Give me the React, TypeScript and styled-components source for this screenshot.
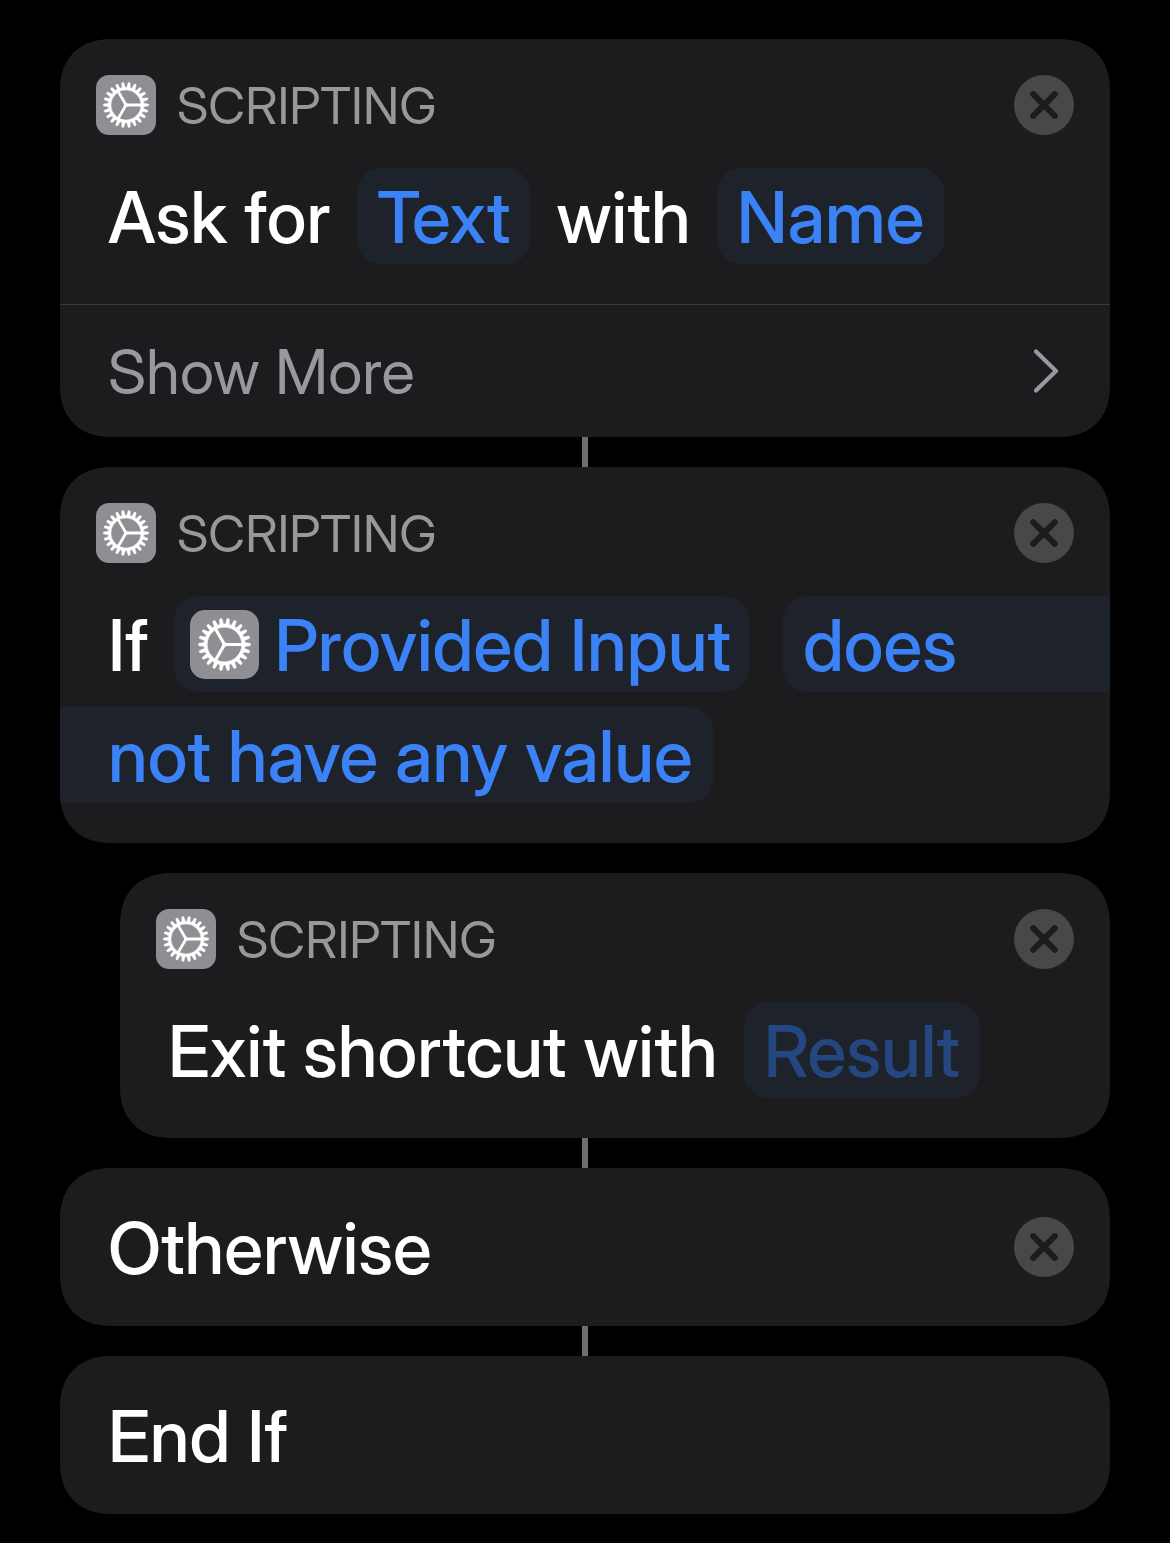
import React from "react";
import styled, { createGlobalStyle, css } from "styled-components";

const color = {
  page: "#000000",
  card: "#1c1c1e",
  token: "#1e222a",
  blue: "#3b82f7",
  blueDim: "#24477f",
  label: "#98989b",
  more: "#98989f",
  line: "#3a3a3c",
  connector: "#6d6d72",
  iconTile: "#8e8e93",
  close: "#48484a",
};

const GlobalStyle = createGlobalStyle`
  *, *::before, *::after { box-sizing: border-box; }
  body {
    margin: 0;
    background: ${color.page};
    color: #ffffff;
    font-family: "Inter Display", Inter, Roboto, "Liberation Sans", sans-serif;
  }
  button {
    margin: 0;
    padding: 0;
    border: 0;
    background: none;
    color: inherit;
    font: inherit;
    text-align: left;
    cursor: pointer;
  }
`;

const Page = styled.main`
  display: flex;
  flex-direction: column;
  padding: 39px 60px 29px;
`;

const Card = styled.section<{ $nested?: boolean }>`
  margin-left: ${(p) => (p.$nested ? 60 : 0)}px;
  border-radius: 48px;
  background: ${color.card};
  overflow: hidden;

  @supports (corner-shape: superellipse(1.2)) {
    border-radius: 52px;
    corner-shape: superellipse(1.2);
  }
`;

const Connector = styled.div<{ $hidden?: boolean }>`
  align-self: center;
  width: 6px;
  height: 30px;
  background: ${(p) => (p.$hidden ? "transparent" : color.connector)};
`;

const Header = styled.header`
  display: flex;
  align-items: center;
  gap: 21px;
  padding: 36px 36px 0;
`;

const Category = styled.h2`
  flex: 1;
  margin: 0;
  padding-top: 2px;
  color: ${color.label};
  font-size: 51px;
  font-weight: 400;
  line-height: 58px;
`;

const IconTile = styled.svg<{ $size: number }>`
  display: block;
  flex: none;
  width: ${(p) => p.$size}px;
  height: ${(p) => p.$size}px;
`;

const CloseButton = styled.button`
  flex: none;
  width: 60px;
  height: 60px;
  border-radius: 50%;

  svg {
    display: block;
  }
`;

const statementText = css`
  font-size: 71px;
  font-weight: 500;
  line-height: 94px;
`;

const Statement = styled.div`
  ${statementText}
  display: flex;
  flex-wrap: wrap;
  align-items: center;
  gap: 15px 26px;
  padding: 33px 0 40px 48px;
  white-space: nowrap;
`;

const Words = styled.span`
  padding-top: 2px;
`;

const tokenBox = css`
  height: 96px;
  padding-top: 2px;
  background: ${color.token};
  color: ${color.blue};
`;

const Token = styled.button<{ $placeholder?: boolean }>`
  ${tokenBox}
  padding-left: 20px;
  padding-right: 20px;
  border-radius: 24px;
  ${(p) => p.$placeholder && css`color: ${color.blueDim};`}
`;

const VariableToken = styled.button`
  ${tokenBox}
  display: flex;
  align-items: center;
  gap: 15px;
  margin-right: 8px;
  padding: 0 18px 0 16px;
  border-radius: 24px;
`;

const WrappedToken = styled.button`
  display: contents;
`;

const TokenStart = styled.span`
  ${tokenBox}
  flex: 1 0 auto;
  padding-left: 20px;
  border-radius: 24px 0 0 24px;
`;

const TokenEnd = styled.span`
  ${tokenBox}
  margin-left: -48px;
  padding-left: 48px;
  padding-right: 20px;
  border-radius: 0 24px 24px 0;
`;

const ShowMore = styled.button`
  display: flex;
  align-items: center;
  justify-content: space-between;
  width: 100%;
  height: 133px;
  padding: 0 48px;
  border-top: 1px solid ${color.line};
  color: ${color.more};
  font-size: 62px;
  line-height: 80px;
`;

const BlockRow = styled.div`
  display: flex;
  align-items: center;
  justify-content: space-between;
  padding: 31px 36px 31px 48px;
`;

const BlockTitle = styled.h2`
  ${statementText}
  margin: 0;
  padding-top: 2px;
`;

const TEETH = 22;

function gearOutline() {
  const points: string[] = [];
  const step = 360 / TEETH;
  const at = (radius: number, degrees: number) => {
    const a = (degrees * Math.PI) / 180;
    points.push(`${(30 + radius * Math.cos(a)).toFixed(2)} ${(30 + radius * Math.sin(a)).toFixed(2)}`);
  };
  for (let i = 0; i < TEETH; i++) {
    const mid = i * step;
    at(17.8, mid - 5.4);
    at(22.2, mid - 2.9);
    at(22.7, mid - 1.6);
    at(22.7, mid + 1.6);
    at(22.2, mid + 2.9);
    at(17.8, mid + 5.4);
  }
  return `M${points.join("L")}Z M45 30A15 15 0 1 0 15 30A15 15 0 1 0 45 30Z`;
}

const GEAR = gearOutline();

function ScriptingIcon({ size = 60 }: { size?: number }) {
  return (
    <IconTile $size={size} viewBox="0 0 60 60" aria-hidden="true">
      <rect width="60" height="60" rx="13" fill={color.iconTile} />
      <path d={GEAR} fill="#fff" fillRule="evenodd" stroke="#fff" strokeWidth="0.4" strokeLinejoin="round" />
      <path d="M30 30H46M30 30L22 16.14M30 30L22 43.86" stroke="#fff" strokeWidth="2.8" fill="none" />
      <circle cx="30" cy="30" r="2" fill="#fff" />
    </IconTile>
  );
}

function Close({ label }: { label: string }) {
  return (
    <CloseButton type="button" aria-label={label}>
      <svg width="60" height="60" viewBox="0 0 60 60" aria-hidden="true">
        <circle cx="30" cy="30" r="30" fill={color.close} />
        <path d="M19.2 19.2L40.8 40.8M40.8 19.2L19.2 40.8" stroke={color.card} strokeWidth="6" strokeLinecap="round" />
      </svg>
    </CloseButton>
  );
}

function ScriptingHeader() {
  return (
    <Header>
      <ScriptingIcon />
      <Category>SCRIPTING</Category>
      <Close label="Remove action" />
    </Header>
  );
}

export default function App() {
  return (
    <>
      <GlobalStyle />
      <Page>
        <Card>
          <ScriptingHeader />
          <Statement>
            <Words>Ask for</Words>
            <Token type="button">Text</Token>
            <Words>with</Words>
            <Token type="button">Name</Token>
          </Statement>
          <ShowMore type="button">
            <Words>Show More</Words>
            <svg width="28" height="48" viewBox="0 0 28 48" fill="none" aria-hidden="true">
              <path d="M2 4.5L22 24L2 43.5" stroke={color.more} strokeWidth="4.2" strokeLinecap="round" strokeLinejoin="round" />
            </svg>
          </ShowMore>
        </Card>
        <Connector />
        <Card>
          <ScriptingHeader />
          <Statement>
            <Words>If</Words>
            <VariableToken type="button">
              <ScriptingIcon size={69} />
              <Words>Provided Input</Words>
            </VariableToken>
            <WrappedToken type="button">
              <TokenStart>does </TokenStart>
              <TokenEnd>not have any value</TokenEnd>
            </WrappedToken>
          </Statement>
        </Card>
        <Connector $hidden />
        <Card $nested>
          <ScriptingHeader />
          <Statement>
            <Words>Exit shortcut with</Words>
            <Token type="button" $placeholder>
              Result
            </Token>
          </Statement>
        </Card>
        <Connector />
        <Card>
          <BlockRow>
            <BlockTitle>Otherwise</BlockTitle>
            <Close label="Remove Otherwise" />
          </BlockRow>
        </Card>
        <Connector />
        <Card>
          <BlockRow>
            <BlockTitle>End If</BlockTitle>
          </BlockRow>
        </Card>
      </Page>
    </>
  );
}
